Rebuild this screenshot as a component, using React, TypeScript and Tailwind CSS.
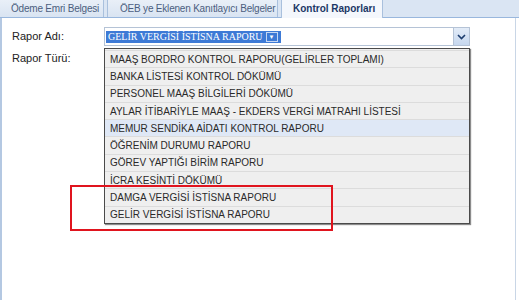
import React from 'react';

const items = [
  'MAAŞ BORDRO KONTROL RAPORU(GELİRLER TOPLAMI)',
  'BANKA LİSTESİ KONTROL DÖKÜMÜ',
  'PERSONEL MAAŞ BİLGİLERİ DÖKÜMÜ',
  'AYLAR İTİBARİYLE MAAŞ - EKDERS VERGİ MATRAHI LİSTESİ',
  'MEMUR SENDİKA AİDATI KONTROL RAPORU',
  'ÖĞRENİM DURUMU RAPORU',
  'GÖREV YAPTIĞI BİRİM RAPORU',
  'İCRA KESİNTİ DÖKÜMÜ',
  'DAMGA VERGİSİ İSTİSNA RAPORU',
  'GELİR VERGİSİ İSTİSNA RAPORU',
];

export default function App() {
  return (
    <div className="w-[519px] h-[300px] bg-white overflow-hidden text-[11px] text-[#222] font-['Liberation_Sans',Arial,sans-serif]">
      {/* tab strip */}
      <div className="flex items-end h-[18px] bg-[#dae5f3] border-b border-[#99b7dd] text-[10px] tracking-[-0.2px] whitespace-nowrap">
        <div className="w-[104px] h-[18px] pl-[11px] flex items-center bg-gradient-to-b from-[#eaf0f8] to-[#d9e4f2] text-[#4c5e7e] border-r border-[#a9c0dd]">
          Ödeme Emri Belgesi
        </div>
        <div className="ml-[3px] w-[171px] h-[18px] pl-[12px] flex items-center bg-gradient-to-b from-[#eaf0f8] to-[#d9e4f2] text-[#4c5e7e] border-x border-[#a9c0dd]">
          ÖEB ye Eklenen Kanıtlayıcı Belgeler
        </div>
        <div className="ml-[3px] w-[102px] h-[19px] -mb-px pl-[11px] flex items-center bg-[#f4f7fc] font-bold text-[#1b3766] border-x border-[#a9c0dd] tracking-normal">
          Kontrol Raporları
        </div>
      </div>

      {/* panel */}
      <div className="relative h-[282px] border-l-2 border-r border-l-[#b4c8e2] border-r-[#c9d6e6] mr-[3px]">
        <div className="pt-[9px]">
          <div className="flex items-center h-[19px]">
            <div className="w-[102px] pl-[10px]">Rapor Adı:</div>
            <div className="w-[366px] h-[19px] border border-[#b5c3d6] bg-white flex items-center">
              <div className="flex-1 pl-px flex items-center">
                <span className="bg-[#3d7ad6] text-white h-[12px] text-[10px] leading-[12px] font-['Liberation_Serif','Times_New_Roman',serif] pl-[2px] pr-[3px] flex items-center gap-[3px]">
                  GELİR VERGİSİ İSTİSNA RAPORU
                  <span className="text-[6px] leading-[8px] h-[10px] border border-white/70 px-[2px] flex items-center">▼</span>
                </span>
              </div>
              <div className="w-[16px] h-full bg-gradient-to-b from-[#e3ecf8] to-[#c6d7ee] border-l border-[#b5c3d6] flex items-center justify-center">
                <svg width="9" height="6" viewBox="0 0 9 6">
                  <path d="M1 1 L4.5 4.5 L8 1" fill="none" stroke="#1d3d6e" strokeWidth="1.6" />
                </svg>
              </div>
            </div>
          </div>
          <div className="flex items-center h-[19px] mt-[3px]">
            <div className="w-[102px] pl-[10px]">Rapor Türü:</div>
          </div>
        </div>

        {/* open dropdown list */}
        <div className="absolute left-[102px] top-[30px] w-[366px] border border-[#4a4a4a] shadow-[1px_1px_1px_rgba(0,0,0,0.45)] bg-[#efefef]">
          <div className="h-px bg-[#efefef]" />
          {items.map((t, i) => (
            <div
              key={t}
              className={`h-[17.3px] flex items-center pl-[5px] border-t border-[#dcdcdc] first:border-t-0 whitespace-nowrap ${
                i === 4 ? 'bg-[#dfe8f6]' : 'bg-[#efefef]'
              } text-[10px] text-[#2a2a2a]`}
            >
              {t}
            </div>
          ))}
        </div>

        {/* red annotation box */}
        <div className="absolute left-[68px] top-[167px] w-[263px] h-[46px] border-2 border-[#e0141e]" />
      </div>
    </div>
  );
}
